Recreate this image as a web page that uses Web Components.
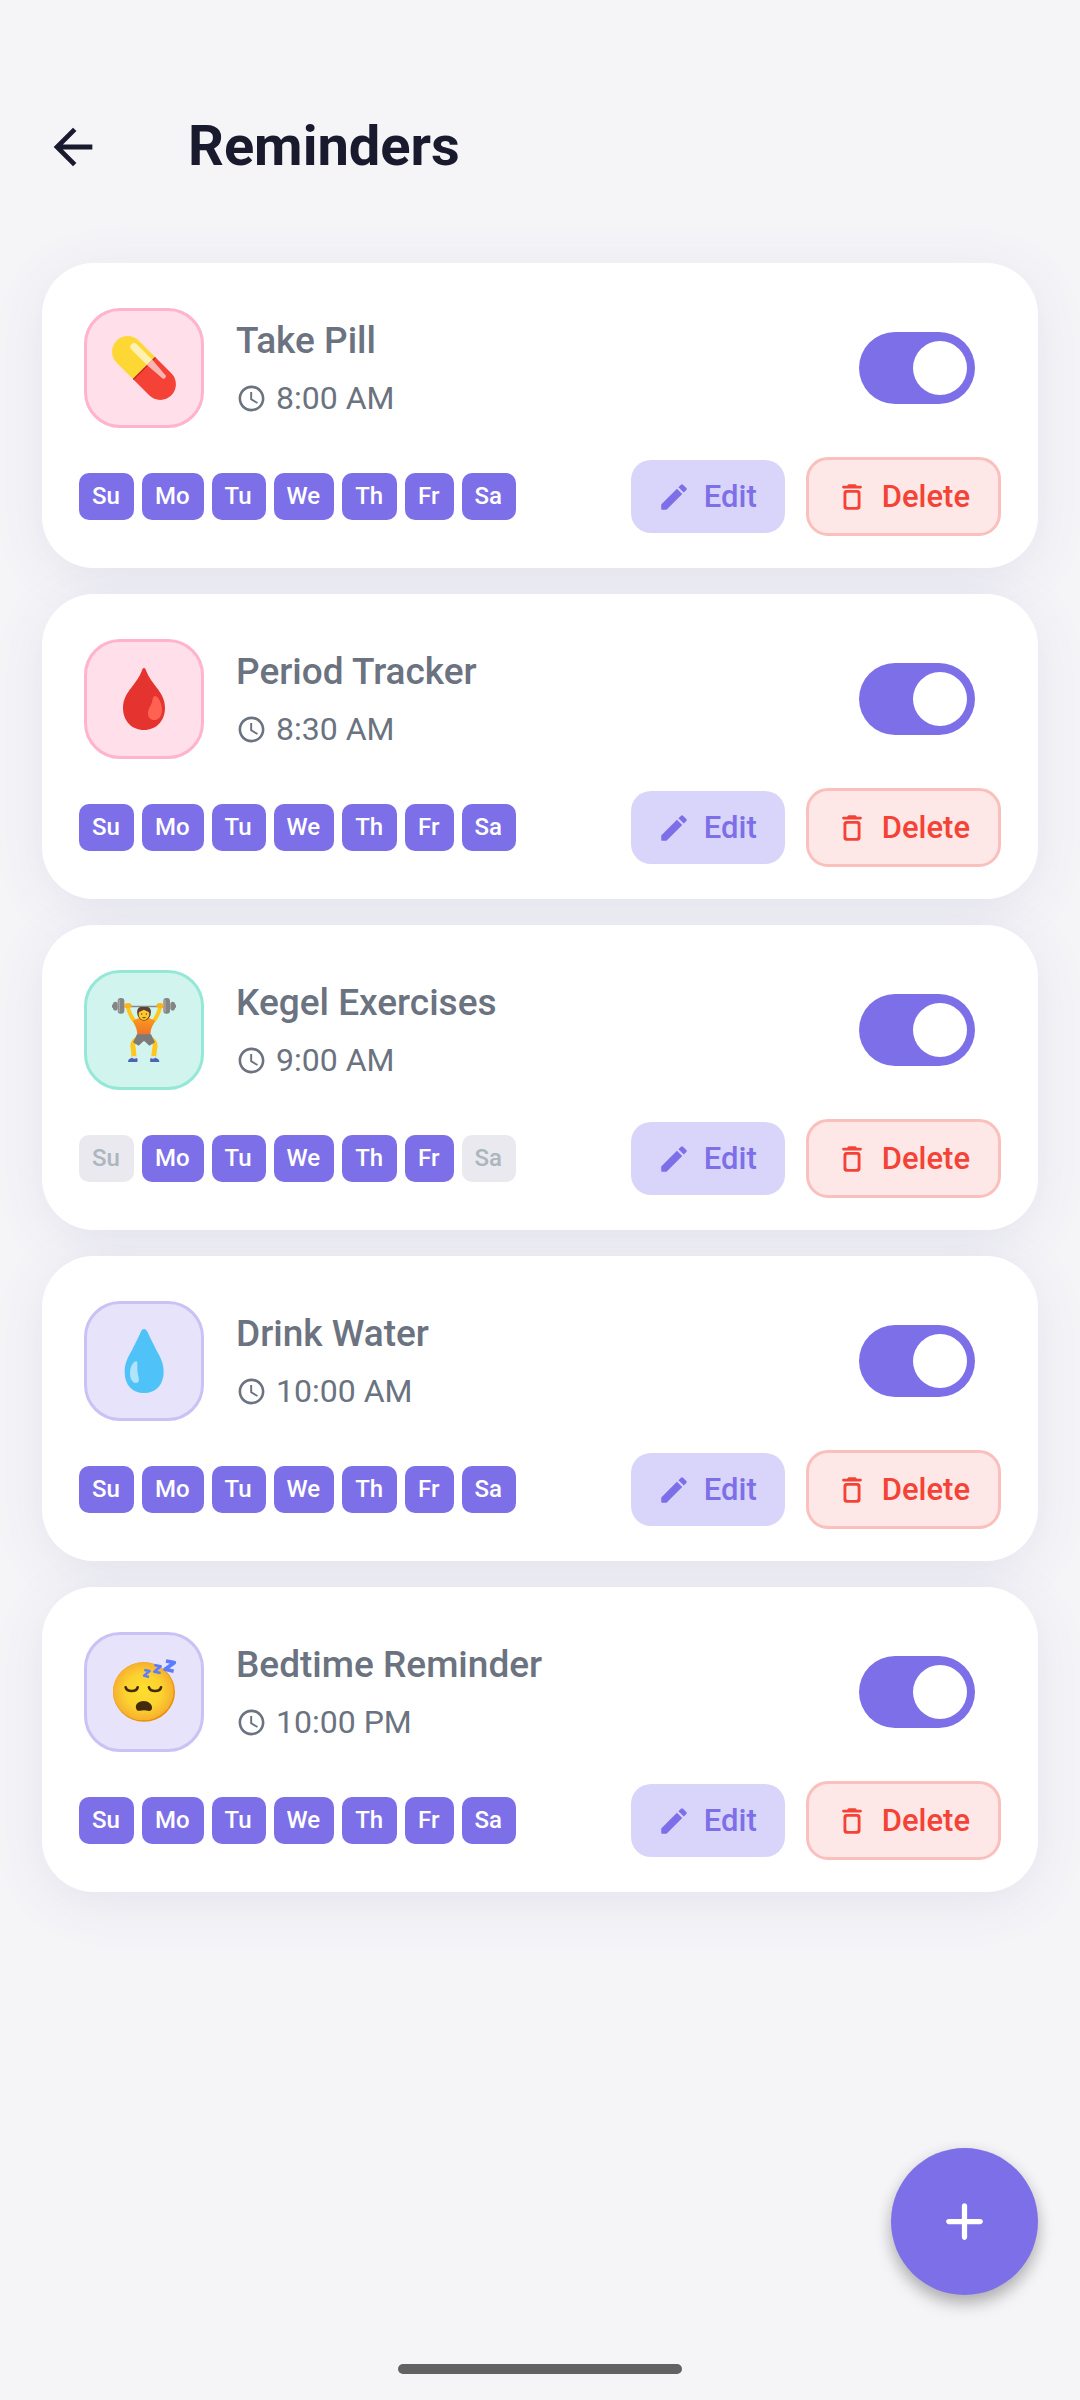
<!DOCTYPE html>
<html lang="en">
<head>
<meta charset="UTF-8">
<meta name="viewport" content="width=device-width, initial-scale=1">
<title>Reminders</title>
<style>
  :root {
    --color-primary: #7d6fe8;
    --color-primary-soft: #d9d5fa;
    --color-danger: #f44336;
    --color-danger-soft: #fde8e7;
    --color-danger-line: #fac0bd;
    --color-text: #6b7280;
    --color-title: #1a1a2e;
    --color-page: #f5f5f8;
  }
  body {
    margin: 0;
    background: var(--color-page);
    color: var(--color-text);
    font-family: Roboto, "Liberation Sans", sans-serif;
  }
</style>
</head>
<body>
<reminders-page></reminders-page>

<script>
const ICONS = {
  back: '<path d="M20 11H7.83l5.59-5.59L12 4l-8 8 8 8 1.41-1.41L7.83 13H20v-2z"/>',
  clock: '<path d="M11.99 2C6.47 2 2 6.48 2 12s4.47 10 9.99 10C17.52 22 22 17.52 22 12S17.52 2 11.99 2zM12 20c-4.42 0-8-3.58-8-8s3.58-8 8-8 8 3.58 8 8-3.58 8-8 8zm.5-13H11v6l5.25 3.15.75-1.23-4.5-2.67z"/>',
  edit: '<path d="M3 17.46v3.04c0 .28.22.5.5.5h3.04c.13 0 .26-.05.35-.15L17.81 9.94l-3.75-3.75L3.15 17.1c-.1.1-.15.22-.15.36zM20.71 7.04a1 1 0 0 0 0-1.41l-2.34-2.34a1 1 0 0 0-1.41 0l-1.83 1.83 3.75 3.75 1.83-1.83z"/>',
  trash: '<path d="M6 19c0 1.1.9 2 2 2h8c1.1 0 2-.9 2-2V9c0-1.1-.9-2-2-2H8c-1.1 0-2 .9-2 2v10zM9 9h6c.55 0 1 .45 1 1v8c0 .55-.45 1-1 1H9c-.55 0-1-.45-1-1v-8c0-.55.45-1 1-1zm6.5-5-.71-.71c-.18-.18-.44-.29-.7-.29H9.91c-.26 0-.52.11-.7.29L8.5 4H6c-.55 0-1 .45-1 1s.45 1 1 1h12c.55 0 1-.45 1-1s-.45-1-1-1h-2.5z"/>',
  plus: '<path d="M18 13h-5v5c0 .55-.45 1-1 1s-1-.45-1-1v-5H6c-.55 0-1-.45-1-1s.45-1 1-1h5V6c0-.55.45-1 1-1s1 .45 1 1v5h5c.55 0 1 .45 1 1s-.45 1-1 1z"/>'
};

const PICTURES = {
  pill: `
    <g transform="translate(96 96) rotate(45)">
      <path d="M0-47h-69a47 47 0 0 0 0 94H0z" fill="#fdd835"/>
      <path d="M0-47h69a47 47 0 0 1 0 94H0z" fill="#f44336"/>
      <path d="M0-47h3v94H0z" fill="#b71c1c"/>
      <path d="M0-35h-66a11 11 0 0 0 0 22H0z" fill="#fff0b3"/>
      <path d="M0-35h3l59 5a7 7 0 0 1 0 13L3-13H0z" fill="#fab4b1"/>
    </g>`,
  blood: `
    <path d="M96 3c-4 0-5 5-7 10-7 18-18 32-30 48-15 19-26 37-26 62 0 38 26 66 63 66s63-28 63-66c0-25-11-43-26-62-12-16-23-30-30-48-2-5-3-10-7-10z" fill="#e53330"/>
    <path d="M128 87c-4 0-6 7-7 15-2 12-12 21-13 35-1 13 8 22 19 22 13 0 23-13 23-31 0-18-11-41-22-41z" fill="#ff6250"/>`,
  lifter: `
    <defs>
      <linearGradient id="shirt" x1="0" y1="0" x2="0" y2="1">
        <stop offset="0" stop-color="#fb9a1c"/><stop offset="1" stop-color="#f0702c"/>
      </linearGradient>
    </defs>
    <path d="M24 23h144v5H24z" fill="#8a8a8a"/>
    <g fill="#858585">
      <rect x="0" y="19" width="6" height="11" rx="3"/>
      <rect x="3" y="11" width="14" height="27" rx="7"/>
      <rect x="17" y="0" width="20" height="47" rx="9"/>
      <rect x="186" y="19" width="6" height="11" rx="3"/>
      <rect x="175" y="11" width="14" height="27" rx="7"/>
      <rect x="154" y="0" width="20" height="47" rx="9"/>
    </g>
    <path d="M22 5v37M159 5v37" stroke="#a8a8a8" stroke-width="4"/>
    <path d="M68 70c-10-12-17-27-21-44M124 70c10-12 17-27 21-44" stroke="#ffc71d" stroke-width="12" fill="none"/>
    <path d="M39 17c8-4 19-3 20 5 0 6-5 10-14 9-9-1-11-11-6-14zM153 17c-8-4-19-3-20 5 0 6 5 10 14 9 9-1 11-11 6-14z" fill="#fbb51b"/>
    <path d="M62 68l17-7h34l17 7-9 17c-5 9-5 17-6 27H76c-1-10-1-18-6-27z" fill="url(#shirt)"/>
    <path d="M77 52c-4-13-1-25 11-25h17c12 0 14 13 10 26-5 10-10 15-19 15s-15-6-19-16z" fill="#5d4037"/>
    <path d="M80 47c0-8 8-7 16-12 6 5 16 4 16 12 0 10-7 19-16 19s-16-8-16-19z" fill="#ffca28"/>
    <circle cx="89" cy="48" r="2" fill="#543930"/><circle cx="103" cy="48" r="2" fill="#543930"/>
    <path d="M90 57h12c-2 5-10 5-12 0z" fill="#7a4a25"/>
    <path d="M72 125c-10 8-12 16-8 28l2 23M120 125c10 8 12 16 8 28l-3 23" stroke="#ffc71d" stroke-width="15" fill="none"/>
    <path d="M75 109h42l12 24-17 10-14-13h-4l-14 13-17-10z" fill="#7d7b7a"/>
    <path d="M61 174h13v9H61zM117 174h14v9h-14z" fill="#e5e0e7"/>
    <path d="M48 192c0-8 4-10 12-13 4 4 10 4 15 1 2 4 2 8 1 12zM142 192c0-8-4-10-12-13-4 4-10 4-14 1-2 4-2 8-1 12z" fill="#4568b5"/>`,
  water: `
    <path d="M96 0c-5 0-8 4-10 10-8 19-17 35-27 55-12 20-21 38-21 63 0 39 22 64 58 64s59-25 59-64c0-25-9-43-21-63-10-20-19-36-27-55-3-6-6-10-11-10z" fill="#4fc3f7"/>
    <path d="M73 97c-10 0-19 18-19 36 0 16 7 29 18 29 6 0 9-5 9-10-1-12-6-22-5-35 0-10 1-20-3-20z" fill="#b1e3fb"/>`,
  sleep: `
    <defs>
      <radialGradient id="face">
        <stop offset="0" stop-color="#fdde2f"/><stop offset=".6" stop-color="#fcd22f"/><stop offset="1" stop-color="#f6b02f"/>
      </radialGradient>
    </defs>
    <ellipse cx="96" cy="96" rx="93" ry="89" fill="#eb8f00"/>
    <ellipse cx="94" cy="94" rx="91" ry="87" fill="url(#face)"/>
    <path d="M41 82c4 14 32 15 36 0M111 82c4 14 32 15 36 0" stroke="#422b0d" stroke-width="8" stroke-linecap="round" fill="none"/>
    <path d="M72 144c-3-12 9-21 23-21s27 10 25 22c-1 7-7 9-12 7-8-2-16-2-24 0-5 2-11-1-12-8z" fill="#422b0d"/>
    <g stroke="#5c7cff" fill="none" stroke-linejoin="round">
      <path d="M97 30l16 3-17 14 15 4" stroke-width="7"/>
      <path d="M127 15l19 4-19 16 19 4" stroke-width="8"/>
      <path d="M162 3l25 5-28 20 26 6" stroke-width="11"/>
    </g>`
};

const DAYS = ['Su', 'Mo', 'Tu', 'We', 'Th', 'Fr', 'Sa'];

class AppIcon extends HTMLElement {
  constructor() {
    super();
    this.attachShadow({ mode: 'open' });
  }

  connectedCallback() {
    this.shadowRoot.innerHTML = `
      <style>
        :host { display: block; flex: none; width: 34px; height: 34px; }
        svg { display: block; width: 100%; height: 100%; fill: currentColor; }
      </style>
      <svg viewBox="0 0 24 24" aria-hidden="true">${ICONS[this.getAttribute('name')]}</svg>
    `;
  }
}

class ReminderPicture extends HTMLElement {
  constructor() {
    super();
    this.attachShadow({ mode: 'open' });
  }

  connectedCallback() {
    this.shadowRoot.innerHTML = `
      <style>
        :host {
          display: grid;
          place-items: center;
          flex: none;
          box-sizing: border-box;
          width: 120px;
          height: 120px;
          border: 3px solid #ffb3cc;
          border-radius: 36px;
          background: #ffdfea;
        }
        :host([tone="mint"]) { border-color: #95e8d7; background: #d1f5ee; }
        :host([tone="violet"]) { border-color: #c9c3f5; background: #e6e3fa; }
        svg { display: block; width: 64px; height: 64px; overflow: visible; }
      </style>
      <svg viewBox="0 0 192 192" aria-hidden="true">${PICTURES[this.getAttribute('name')]}</svg>
    `;
  }
}

class ToggleSwitch extends HTMLElement {
  constructor() {
    super();
    this.attachShadow({ mode: 'open' });
  }

  connectedCallback() {
    this.shadowRoot.innerHTML = `
      <style>
        :host { display: block; flex: none; }
        input {
          appearance: none;
          display: flex;
          align-items: center;
          box-sizing: border-box;
          width: 116px;
          height: 72px;
          margin: 0;
          padding: 0 8px;
          border-radius: 36px;
          background: #d5d5dd;
          cursor: pointer;
        }
        input::before {
          content: "";
          width: 54px;
          height: 54px;
          border-radius: 50%;
          background: #fff;
        }
        input:checked { justify-content: flex-end; background: var(--color-primary); }
      </style>
      <input type="checkbox" role="switch" aria-label="${this.getAttribute('label')}" checked>
    `;
  }
}

class ActionButton extends HTMLElement {
  constructor() {
    super();
    this.attachShadow({ mode: 'open' });
  }

  connectedCallback() {
    this.shadowRoot.innerHTML = `
      <style>
        :host { display: block; flex: none; }
        button {
          display: flex;
          align-items: center;
          gap: 13px;
          box-sizing: border-box;
          height: 73px;
          padding: 0 28px 0 26px;
          border: 0;
          border-radius: 20px;
          background: var(--color-primary-soft);
          color: var(--color-primary);
          font: 500 31px/36px Roboto, "Liberation Sans", sans-serif;
          cursor: pointer;
        }
        :host([kind="danger"]) button {
          height: 79px;
          border: 3px solid var(--color-danger-line);
          border-radius: 22px;
          background: var(--color-danger-soft);
          color: var(--color-danger);
        }
      </style>
      <button type="button"><app-icon name="${this.getAttribute('icon')}"></app-icon><slot></slot></button>
    `;
  }
}

class ReminderCard extends HTMLElement {
  constructor() {
    super();
    this.attachShadow({ mode: 'open' });
  }

  connectedCallback() {
    const off = (this.getAttribute('off') || '').split(' ');
    const name = this.getAttribute('name');

    this.shadowRoot.innerHTML = `
      <style>
        :host { display: block; position: relative; }
        /* the shadow sits below every card of the list */
        :host::before {
          content: "";
          position: absolute;
          z-index: -1;
          inset: 0;
          border-radius: 52px;
          box-shadow: 0 10px 52px rgba(80, 70, 150, 0.1);
        }
        article {
          display: flex;
          flex-direction: column;
          gap: 29px;
          padding: 45px 37px 32px;
          border-radius: 52px;
          background: #fff;
        }
        .top { display: flex; align-items: center; gap: 32px; padding: 0 26px 0 5px; }
        .text { flex: 1; display: flex; flex-direction: column; gap: 12px; }
        h2 { margin: 0; font-size: 37px; line-height: 48px; font-weight: 500; }
        .time { display: flex; align-items: center; gap: 9px; font-size: 32px; line-height: 42px; }
        .time app-icon { width: 31px; height: 31px; }
        .bottom { display: flex; align-items: center; justify-content: space-between; gap: 20px; }
        ul { display: flex; gap: 8px; margin: 0; padding: 0; list-style: none; }
        li {
          padding: 0 14px 0 13px;
          border-radius: 10px;
          background: var(--color-primary);
          color: #fff;
          font-size: 24px;
          line-height: 47px;
          font-weight: 500;
        }
        li.off { background: #eae9f0; color: #adb5bd; }
        .actions { display: flex; align-items: center; gap: 21px; }
      </style>
      <article>
        <div class="top">
          <reminder-picture name="${this.getAttribute('picture')}" tone="${this.getAttribute('tone')}"></reminder-picture>
          <div class="text">
            <h2>${name}</h2>
            <div class="time"><app-icon name="clock"></app-icon><slot></slot></div>
          </div>
          <toggle-switch label="${name}"></toggle-switch>
        </div>
        <div class="bottom">
          <ul>${DAYS.map(day => `<li class="${off.includes(day) ? 'off' : ''}">${day}</li>`).join('')}</ul>
          <div class="actions">
            <action-button icon="edit">Edit</action-button>
            <action-button icon="trash" kind="danger">Delete</action-button>
          </div>
        </div>
      </article>
    `;
  }
}

class RemindersPage extends HTMLElement {
  constructor() {
    super();
    this.attachShadow({ mode: 'open' });
  }

  connectedCallback() {
    this.shadowRoot.innerHTML = `
      <style>
        :host { display: flex; flex-direction: column; min-height: 100vh; }
        header { display: flex; align-items: center; gap: 83px; padding: 114px 41px 84px; }
        button { display: grid; place-items: center; padding: 0; border: 0; cursor: pointer; }
        .back { width: 64px; height: 64px; background: none; color: var(--color-title); }
        .back app-icon { width: 58px; height: 58px; }
        h1 { margin: 0; color: var(--color-title); font-size: 56px; line-height: 65px; font-weight: 700; }
        main {
          flex: 1;
          display: flex;
          flex-direction: column;
          gap: 26px;
          padding: 0 42px;
          isolation: isolate;
        }
        footer { display: flex; flex-direction: column; gap: 69px; padding: 42px 42px 26px; }
        .add {
          align-self: flex-end;
          width: 147px;
          height: 147px;
          border-radius: 50%;
          background: var(--color-primary);
          color: #fff;
          box-shadow: 0 9px 16px rgba(0, 0, 0, 0.26), 0 2px 16px rgba(0, 0, 0, 0.06);
        }
        .add app-icon { width: 63px; height: 63px; }
        .handle { align-self: center; width: 284px; height: 10px; border-radius: 5px; background: #626262; }
      </style>
      <header>
        <button class="back" type="button" aria-label="Back"><app-icon name="back"></app-icon></button>
        <h1>Reminders</h1>
      </header>
      <main>
        <reminder-card name="Take Pill" picture="pill" tone="pink">8:00 AM</reminder-card>
        <reminder-card name="Period Tracker" picture="blood" tone="pink">8:30 AM</reminder-card>
        <reminder-card name="Kegel Exercises" picture="lifter" tone="mint" off="Su Sa">9:00 AM</reminder-card>
        <reminder-card name="Drink Water" picture="water" tone="violet">10:00 AM</reminder-card>
        <reminder-card name="Bedtime Reminder" picture="sleep" tone="violet">10:00 PM</reminder-card>
      </main>
      <footer>
        <button class="add" type="button" aria-label="Add reminder"><app-icon name="plus"></app-icon></button>
        <div class="handle"></div>
      </footer>
    `;
  }
}

customElements.define('app-icon', AppIcon);
customElements.define('reminder-picture', ReminderPicture);
customElements.define('toggle-switch', ToggleSwitch);
customElements.define('action-button', ActionButton);
customElements.define('reminder-card', ReminderCard);
customElements.define('reminders-page', RemindersPage);
</script>
</body>
</html>
